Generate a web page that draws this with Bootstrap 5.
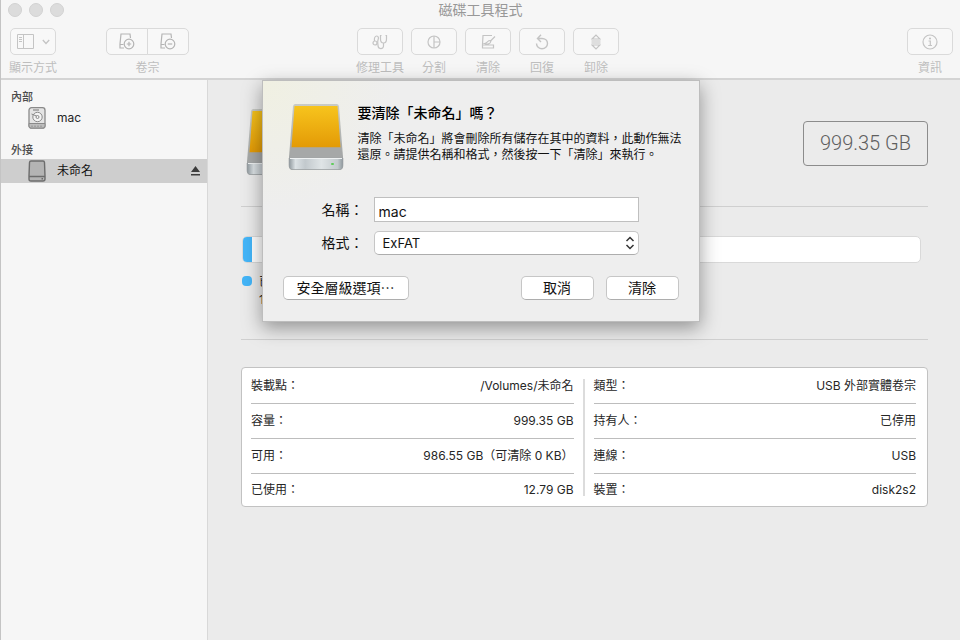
<!DOCTYPE html>
<html lang="zh-Hant">
<head>
<meta charset="utf-8">
<meta name="viewport" content="width=device-width, initial-scale=1">
<title>磁碟工具程式</title>
<link href="https://cdn.jsdelivr.net/npm/bootstrap@5.3.0/dist/css/bootstrap.min.css" rel="stylesheet">
<style>
body { font-family: Inter, "Noto Sans CJK TC", sans-serif; font-size: 12px; line-height: 16px; color: #262626; background: #ebebeb; overflow: hidden; }
svg { display: block; fill: none; flex: none; }
.app-window { border-left: 1px solid #c4c4c4; }
.app-header { background: #f6f6f6; border-bottom: 2px solid #d4d4d4; }
.titlebar { height: 20px; }
.app-title { font-size: 14px; line-height: 20px; color: #989898; }
.light { width: 14px; height: 14px; background: #dcdcdc; border: 1px solid #d2d2d2; }
.lights { padding: 3px 0 0 7px; gap: 7px; }
.toolbar { padding: 8px 7px 1px 9px; color: #c4c4c4; }
.tool-item { gap: 4px; }
.tool-single { width: 46px; }
.tool-item-label { line-height: 18px; color: #bebebe; white-space: nowrap; }
.tool-btn { width: 46px; height: 27px; padding: 0; color: #c4c4c4 !important; background: #f8f8f8 !important; border: 1px solid #dadada !important; border-radius: 5px; opacity: 1 !important; display: flex; align-items: center; justify-content: center; gap: 8px; }
.btn-group .tool-btn { width: 42px; color: #b4b4b4 !important; }
.volume-group { margin-left: 50px; }
.action-group { margin-left: 168px; gap: 8px; }
.sidebar { width: 207px; background: #f6f6f6; border-right: 1px solid #d8d8d8; padding-top: 8px; }
.side-heading { font-size: 11px; line-height: 18px; font-weight: 500; padding-left: 10px; color: #4c4c4c; }
.side-item { height: 24px; padding: 0 7px 0 26px; gap: 10px; color: #262626; text-decoration: none; }
.side-item.active { background: #cecece; color: #111; }
.side-group { margin-bottom: 11px; }
.detail { padding: 0 32px 0 33px; }
.volume-header { height: 127px; padding: 0 0 0 5px; border-bottom: 1px solid #cfcfcf; }
.capacity { border: 1px solid #8c8c8c; border-radius: 4px; width: 125px; height: 45px; font-family: Roboto, sans-serif; font-size: 20px; font-weight: 300; color: #5e5e5e; }
.usage { height: 133px; padding: 29px 7px 0 1px; border-bottom: 1px solid #cfcfcf; }
.usage-bar { height: 27px; background: #fff; border: 1px solid #d9d9d9; border-radius: 5px; }
.usage-bar .progress-bar { background: #43b5f8; }
.legend-dot { width: 10px; height: 10px; border-radius: 4px; background: #43b5f8; margin-top: 3px; }
.legend { margin-top: 10px; gap: 7px; }
.legend-text { line-height: 18px; }
.info-card { margin-top: 27px; border: 1px solid #c2c2c2; border-radius: 4px; background: #fff; padding: 0 11px 0 9px; }
.info-split { width: 2px; background: #dcdcdc; margin: 11px 9px 10px 9px; }
.info-table th, .info-table td { height: 35px; padding: 1px 0 0; font-weight: 400; border-bottom: 1px solid #bdbdbd; white-space: nowrap; }
.info-table tr:last-child th, .info-table tr:last-child td { height: 33px; border-bottom: 0; }
.sheet { width: 438px; padding: 23px 20px 21px; background: radial-gradient(circle at 0 0, #f0f0e2 0, #eee 130px); border: 1px solid #bdbdbd; box-shadow: 0 6px 18px rgba(0,0,0,.38); color: #111; }
.sheet-intro { gap: 14px; padding-left: 5px; }
.sheet-title { font-size: 14px; line-height: 18px; font-weight: 500; margin: 0 0 9px; color: #000; }
.sheet-text { margin: 0; line-height: 16px; white-space: nowrap; }
.sheet-fields { display: grid; grid-template-columns: 81px 265px; column-gap: 10px; row-gap: 9px; margin-top: 25px; align-items: center; }
.sheet-fields label { font-size: 14px; line-height: 24px; text-align: right; }
.sheet .form-control { height: 25px; font-size: 14px; padding: 3px 4px 0; border: 1px solid #bfbfbf; border-radius: 0; color: #111; background: #fff; }
.sheet .form-select { height: 24px; font-size: 13px; line-height: 18px; padding: 0 30px 0 8px; border: 1px solid #c6c6c6; border-bottom-color: #adadad; border-radius: 5px; color: #111; background: #fff url("data:image/svg+xml,%3Csvg xmlns='http://www.w3.org/2000/svg' viewBox='0 0 10 14'%3E%3Cpath d='M1.5 5 5 1.5 8.5 5M1.5 9 5 12.5 8.5 9' fill='none' stroke='%23333' stroke-width='1.5'/%3E%3C/svg%3E") no-repeat right 3px center / 10px 14px; }
.sheet-actions { margin-top: 21px; gap: 12px; }
.sheet-btn { height: 24px; min-width: 73px; font-size: 14px; line-height: 20px; padding: 0 13px; background: #fff; border: 1px solid #c6c6c6; border-bottom-color: #adadad; border-radius: 5px; color: #111; white-space: nowrap; }
</style>
</head>
<body>
<svg width="0" height="0" class="position-absolute" aria-hidden="true">
  <defs>
    <linearGradient id="gold" x1="0" y1="0" x2="0" y2="1"><stop offset="0" stop-color="#f7c41d"/><stop offset="1" stop-color="#e39a06"/></linearGradient>
    <linearGradient id="shell" x1="0" y1="0" x2="0" y2="1"><stop offset="0" stop-color="#c9cbc6"/><stop offset="1" stop-color="#999c9d"/></linearGradient>
    <linearGradient id="front" x1="0" y1="0" x2="1" y2="0"><stop offset="0" stop-color="#8e979c"/><stop offset=".12" stop-color="#dce2e5"/><stop offset=".3" stop-color="#c2c9cd"/><stop offset=".6" stop-color="#dfe4e6"/><stop offset=".9" stop-color="#c4cbce"/><stop offset="1" stop-color="#8e979c"/></linearGradient>
    <symbol id="drive" viewBox="0 0 56 68">
      <path d="M5 2.500Q5.300 0 7 0H49Q50.700 0 51 2.500L55 53V62Q55 66 51 66H5Q1 66 1 62V53Z" fill="url(#shell)"/>
      <path d="M6.500 2H49.500L52.500 43.500H3.500Z" fill="url(#gold)"/>
      <path d="M3.500 43.500H52.500L54.500 54H1.500Z" fill="#a6a8a8"/>
      <path d="M1 54H55V61Q55 65.500 51 65.500H5Q1 65.500 1 61Z" fill="url(#front)" stroke="#9da2a5" stroke-width=".6"/>
      <path d="M2 54.500H54" stroke="#eef1f2"/>
      <rect x="43" y="59" width="3" height="2" rx="1" fill="#5fcc5a"/>
    </symbol>
  </defs>
</svg>
<div class="app-window d-flex flex-column vh-100">
  <header class="app-header">
    <div class="titlebar position-relative">
      <div class="lights d-flex position-absolute">
        <span class="light rounded-circle"></span><span class="light rounded-circle"></span><span class="light rounded-circle"></span>
      </div>
      <h1 class="app-title text-center fw-normal m-0">磁碟工具程式</h1>
    </div>
    <div class="toolbar d-flex">
      <div class="tool-item tool-single d-flex flex-column align-items-center">
        <button class="btn tool-btn" disabled aria-label="顯示方式">
          <svg width="17" height="15" viewBox="0 0 17 15" stroke="currentColor"><path d="M.5.500H16.500V14.500H.5ZM6.500.500V14.500M2 3.500H5M2 5.500H5M2 7.500H5"/></svg>
          <svg width="8" height="6" viewBox="0 0 8 6" stroke="currentColor" stroke-width="1.300"><path d="M.8 1 4 4.500 7.200 1"/></svg>
        </button>
        <span class="tool-item-label">顯示方式</span>
      </div>
      <div class="tool-item volume-group d-flex flex-column align-items-center">
        <div class="btn-group" role="group" aria-label="卷宗">
          <button class="btn tool-btn" disabled aria-label="加入卷宗"><svg width="16" height="17" viewBox="0 0 16 17" stroke="currentColor" stroke-width="1.200"><path d="M5 15H1V11L2 1H11L11.500 5M1 11.500H4.500M1 15V11.500"/><circle cx="10" cy="11" r="4.800"/><path d="M7.800 11H12.200M10 8.800V13.200"/></svg></button>
          <button class="btn tool-btn" disabled aria-label="移除卷宗"><svg width="16" height="17" viewBox="0 0 16 17" stroke="currentColor" stroke-width="1.200"><path d="M5 15H1V11L2 1H11L11.500 5M1 11.500H4.500M1 15V11.500"/><circle cx="10" cy="11" r="4.800"/><path d="M7.800 11H12.200"/></svg></button>
        </div>
        <span class="tool-item-label">卷宗</span>
      </div>
      <div class="action-group d-flex">
        <div class="tool-item tool-single d-flex flex-column align-items-center">
          <button class="btn tool-btn" disabled aria-label="修理工具"><svg width="16" height="16" viewBox="0 0 16 16" stroke="currentColor" stroke-width="1.200"><circle cx="3" cy="9" r="2"/><path d="M2.500 7C2 4 3 2 4.700 2C6.500 2 6.800 4 6 6C5.200 8 6 9 6 11.500C6 15.500 11.500 15.500 11.500 12V9M9.500 1.500H8.500V5C8.500 7.500 10 9 11.500 9C13 9 14.500 7.500 14.500 5V1.500H13.500"/></svg></button>
          <span class="tool-item-label">修理工具</span>
        </div>
        <div class="tool-item tool-single d-flex flex-column align-items-center">
          <button class="btn tool-btn" disabled aria-label="分割"><svg width="14" height="14" viewBox="0 0 14 14" stroke="currentColor" stroke-width="1.200"><circle cx="7" cy="7" r="6"/><path d="M7 1V13M7 7H13"/></svg></button>
          <span class="tool-item-label">分割</span>
        </div>
        <div class="tool-item tool-single d-flex flex-column align-items-center">
          <button class="btn tool-btn" disabled aria-label="清除"><svg width="15" height="15" viewBox="0 0 15 15" stroke="currentColor" stroke-width="1.200"><path d="M11 1.500H2L1.500 10.500V14H12.500V10.500M1.500 11H12.500M14 2.500 9 7.500M9 6.500C6.500 6.500 6.500 9 3.500 9.500C6 10.500 9.500 10 9.800 7.500Z"/></svg></button>
          <span class="tool-item-label">清除</span>
        </div>
        <div class="tool-item tool-single d-flex flex-column align-items-center">
          <button class="btn tool-btn" disabled aria-label="回復"><svg width="14" height="16" viewBox="0 0 14 16" stroke="currentColor" stroke-width="1.400"><path d="M6 .8 2.500 4.500 6 8M2.500 4.500H7C10 4.500 12.500 6.500 12.500 9.500S10 14.700 7 14.700S1.500 12.500 1.500 9.500"/></svg></button>
          <span class="tool-item-label">回復</span>
        </div>
        <div class="tool-item tool-single d-flex flex-column align-items-center">
          <button class="btn tool-btn" disabled aria-label="卸除"><svg width="10" height="16" viewBox="0 0 10 16" stroke="currentColor" stroke-width="1.200"><path d="M1 5 5 1 9 5ZM.5 7H9.500M.5 9H9.500M1 11 5 15 9 11Z"/></svg></button>
          <span class="tool-item-label">卸除</span>
        </div>
      </div>
      <div class="tool-item tool-single ms-auto d-flex flex-column align-items-center">
        <button class="btn tool-btn" disabled aria-label="資訊"><svg width="16" height="16" viewBox="0 0 16 16" stroke="currentColor" stroke-width="1.200"><circle cx="8" cy="8" r="7"/><path d="M6.500 7H8.300V11.500M6.200 11.500H10"/><circle cx="8" cy="4.500" r=".5" fill="currentColor"/></svg></button>
        <span class="tool-item-label">資訊</span>
      </div>
    </div>
  </header>

  <div class="d-flex flex-grow-1 position-relative">
    <nav class="sidebar flex-shrink-0">
      <div class="side-group">
        <div class="side-heading">內部</div>
        <a href="#" class="side-item d-flex align-items-center">
          <svg width="20" height="22" viewBox="0 0 20 22" stroke="#8a8a8a"><rect x="2" y=".7" width="16" height="20.500" rx="2.500" fill="#e4e4e4" stroke-width="1.300"/><path d="M2 16.500H18V19Q18 21 16 21H4Q2 21 2 19Z" fill="#bdbdbd"/><path d="M6 3H12" stroke="#777"/><circle cx="10.500" cy="10" r="4.700" fill="#f3f3f3"/><circle cx="10.500" cy="10" r="1.500"/><path d="M4.500 7 9.500 9M5 18.500V20M8 18.500V20M11 18.500V20M14 18.500V20"/></svg>
          <span>mac</span>
        </a>
      </div>
      <div class="side-group">
        <div class="side-heading">外接</div>
        <a href="#" class="side-item active d-flex align-items-center">
          <svg width="20" height="22" viewBox="0 0 20 22" stroke="#6c6c6c" stroke-width="1.400"><path d="M4 1H16Q17.400 1 17.500 2.500L18 16V19Q18 21 16 21H4Q2 21 2 19V16L2.500 2.500Q2.600 1 4 1Z" fill="#b4b4b4"/><path d="M2 16.500H18M14.500 18.800H16"/></svg>
          <span class="flex-grow-1">未命名</span>
          <svg width="9" height="10" viewBox="0 0 9 10"><path d="M4.500 0 9 6H0ZM0 8H9V9.500H0Z" fill="#3c3c3c"/></svg>
        </a>
      </div>
    </nav>

    <main class="detail flex-grow-1">
      <div class="volume-header d-flex align-items-center justify-content-between">
        <svg width="56" height="68"><use href="#drive"/></svg>
        <div class="capacity d-flex align-items-center justify-content-center">999.35 GB</div>
      </div>
      <div class="usage">
        <div class="progress usage-bar" role="progressbar" aria-label="已使用" aria-valuenow="1" aria-valuemin="0" aria-valuemax="100"><div class="progress-bar" style="width: 1.28%"></div></div>
        <div class="legend d-flex">
          <span class="legend-dot"></span>
          <div class="legend-text">已使用<br>12.79 GB</div>
        </div>
      </div>
      <div class="info-card d-flex">
        <table class="info-table flex-fill w-50">
          <tbody>
            <tr><th scope="row">裝載點：</th><td class="text-end">/Volumes/未命名</td></tr>
            <tr><th scope="row">容量：</th><td class="text-end">999.35 GB</td></tr>
            <tr><th scope="row">可用：</th><td class="text-end">986.55 GB（可清除 0 KB）</td></tr>
            <tr><th scope="row">已使用：</th><td class="text-end">12.79 GB</td></tr>
          </tbody>
        </table>
        <div class="info-split flex-shrink-0"></div>
        <table class="info-table flex-fill w-50">
          <tbody>
            <tr><th scope="row">類型：</th><td class="text-end">USB 外部實體卷宗</td></tr>
            <tr><th scope="row">持有人：</th><td class="text-end">已停用</td></tr>
            <tr><th scope="row">連線：</th><td class="text-end">USB</td></tr>
            <tr><th scope="row">裝置：</th><td class="text-end">disk2s2</td></tr>
          </tbody>
        </table>
      </div>
    </main>

    <form class="sheet position-absolute top-0 start-50 translate-middle-x" role="dialog" aria-labelledby="sheetTitle">
      <div class="sheet-intro d-flex">
        <svg width="56" height="68"><use href="#drive"/></svg>
        <div>
          <h2 class="sheet-title" id="sheetTitle">要清除「未命名」嗎？</h2>
          <p class="sheet-text">清除「未命名」將會刪除所有儲存在其中的資料，此動作無法<br>還原。請提供名稱和格式，然後按一下「清除」來執行。</p>
        </div>
      </div>
      <div class="sheet-fields">
        <label for="volName">名稱：</label>
        <input class="form-control" id="volName" type="text" value="mac">
        <label for="volFormat">格式：</label>
        <select class="form-select" id="volFormat"><option>ExFAT</option></select>
      </div>
      <div class="sheet-actions d-flex">
        <button type="button" class="btn sheet-btn me-auto">安全層級選項⋯</button>
        <button type="button" class="btn sheet-btn">取消</button>
        <button type="submit" class="btn sheet-btn">清除</button>
      </div>
    </form>
  </div>
</div>
<script src="https://cdn.jsdelivr.net/npm/bootstrap@5.3.0/dist/js/bootstrap.bundle.min.js"></script>
</body>
</html>
